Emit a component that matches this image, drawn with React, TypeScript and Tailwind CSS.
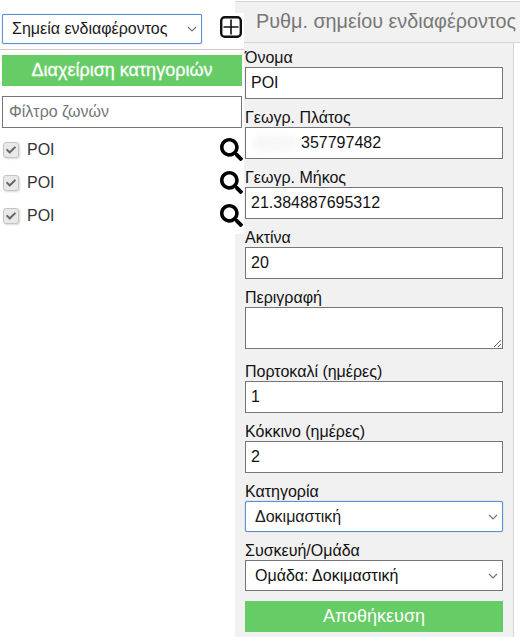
import { FaCheck, FaSearch } from 'react-icons/fa';

const inputClass =
  'block w-[258px] h-[32px] border border-[#767676] bg-white px-[5px] text-[16px] text-[#111] outline-none';
const labelClass = 'block text-[16px] leading-[18px] text-[#111]';

function Field({ label, value }: { label: string; value: string }) {
  return (
    <div>
      <label className={labelClass}>{label}</label>
      <input type="text" readOnly value={value} className={inputClass} />
    </div>
  );
}

function Dropdown({ value, focused, width, height }: { value: string; focused?: boolean; width: string; height: string }) {
  return (
    <div className={`relative ${width} ${height}`}>
      <select
        className={
          focused
            ? 'block h-full w-full appearance-none rounded-[2px] border border-[#5b8fd9] bg-white pl-[9px] text-[16px] text-[#1a1a1a] shadow-[0_0_1px_#5b8fd9] outline-none'
            : 'block h-full w-full appearance-none border border-[#767676] bg-white pl-[9px] text-[16px] text-[#111] outline-none'
        }
      >
        <option>{value}</option>
      </select>
      <svg className="pointer-events-none absolute right-[5px] top-1/2 -mt-[3px]" width="10" height="6" viewBox="0 0 10 6" fill="none">
        <path d="M1 1l4 4 4-4" stroke="#777" strokeWidth="1.2" />
      </svg>
    </div>
  );
}

function PoiRow() {
  return (
    <div className="flex h-[33px] items-center pl-[3px] pr-[1px]">
      <span className="flex h-[16px] w-[16px] items-center justify-center rounded-[3px] border border-[#c4c4c4] bg-[#e9e9e9] shadow-[1px_1px_2px_rgba(0,0,0,0.15)]">
        <FaCheck className="h-[10px] w-[10px] text-[#666]" />
      </span>
      <span className="ml-[8px] flex-1 text-[16px] text-[#333]">POI</span>
      <FaSearch className="h-[23px] w-[23px] text-black" />
    </div>
  );
}

export default function App() {
  return (
    <div className="flex h-[637px] w-[520px] items-start overflow-hidden bg-white font-['Liberation_Sans',Arial,sans-serif]">
      {/* Left list */}
      <div className="relative z-10 mt-[13px] h-[221px] w-[244px] shrink-0 bg-white">
        <div className="flex h-[36px] items-start pl-[2px] pt-[1px]">
          <Dropdown value="Σημεία ενδιαφέροντος" focused width="w-[200px]" height="h-[30px]" />
          <svg className="ml-[18px] mt-[2px]" width="22" height="22" viewBox="0 0 22 22" fill="none" stroke="#111">
            <rect x="1.2" y="1.2" width="19.6" height="19.6" rx="3.5" strokeWidth="2.4" />
            <path d="M11 3.5v15M3.5 11h15" strokeWidth="1.6" />
          </svg>
        </div>
        <div className="border-t border-[#ccc] pt-[5px] pl-[2px] pr-[2px]">
          <button className="block h-[31px] w-[240px] bg-[#66cc66] text-[18px] text-white [-webkit-text-stroke:0.3px_white]">
            Διαχείριση κατηγοριών
          </button>
          <input
            type="text"
            placeholder="Φίλτρο ζωνών"
            className="mt-[10px] block h-[32px] w-[240px] border border-[#767676] px-[6px] text-[16px] outline-none placeholder:text-[#757575]"
          />
        </div>
        <div className="mt-[5px]">
          <PoiRow />
          <PoiRow />
          <PoiRow />
        </div>
      </div>

      {/* Settings panel */}
      <div className="-ml-[9px] mt-[1px] flex h-[636px] w-[285px] shrink-0 flex-col">
        <div className="h-[42px] shrink-0 border-y border-[#d4d4d4] bg-[#f1f1f1] pl-[21px] pt-[7px] text-[19.8px] leading-[24px] text-[#777]">
          Ρυθμ. σημείου ενδιαφέροντος
        </div>
        <div className="flex w-[279px] flex-1 flex-col border-r border-[#d4d4d4] bg-[#f1f1f1] pl-[10px] pt-[6px]">
          <div className="flex flex-col gap-[10px]">
            <Field label="Όνομα" value="POI" />
            <div>
              <label className={labelClass}>Γεωγρ. Πλάτος</label>
              <div className="relative">
                <input type="text" readOnly value="357797482" className={`${inputClass} pl-[55px]`} />
                <span className="absolute left-[8px] top-[8px] h-[16px] w-[44px] rounded-full bg-[#e4e4e4] opacity-30 blur-[3px]" />
              </div>
            </div>
            <Field label="Γεωγρ. Μήκος" value="21.384887695312" />
            <Field label="Ακτίνα" value="20" />
            <div>
              <label className={labelClass}>Περιγραφή</label>
              <textarea readOnly className="block h-[42px] w-[258px] border border-[#767676] bg-white outline-none" />
            </div>
            <div className="mt-[4px]">
              <Field label="Πορτοκαλί (ημέρες)" value="1" />
            </div>
            <Field label="Κόκκινο (ημέρες)" value="2" />
            <div>
              <label className={labelClass}>Κατηγορία</label>
              <Dropdown value="Δοκιμαστική" focused width="w-[258px]" height="h-[31px]" />
            </div>
            <div>
              <label className={labelClass}>Συσκευή/Ομάδα</label>
              <Dropdown value="Ομάδα: Δοκιμαστική" width="w-[258px]" height="h-[31px]" />
            </div>
            <button className="block h-[31px] w-[258px] bg-[#66cc66] text-[18px] text-white">Αποθήκευση</button>
          </div>
        </div>
      </div>
    </div>
  );
}
